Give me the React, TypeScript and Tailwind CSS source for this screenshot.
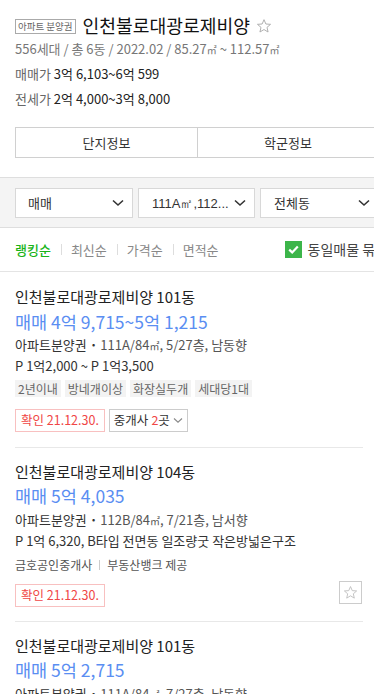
import React from "react";

const F = { fontFamily: '"Noto Sans CJK KR", "Noto Sans", sans-serif' };

function Chevron() {
  return (
    <svg width="12" height="8" viewBox="0 0 12 8" fill="none">
      <path d="M1 1.5 L6 6 L11 1.5" stroke="#333" strokeWidth="1.6" />
    </svg>
  );
}

function StarOutline({ size = 16, color = "#aaa" }: { size?: number; color?: string }) {
  return (
    <svg width={size} height={size} viewBox="0 0 24 24" fill="none">
      <path
        d="M12 2.5 L14.8 9 L21.8 9.5 L16.5 14.1 L18.1 21 L12 17.3 L5.9 21 L7.5 14.1 L2.2 9.5 L9.2 9 Z"
        stroke={color}
        strokeWidth="1.4"
        strokeLinejoin="round"
      />
    </svg>
  );
}

function Select({ label, w, pl, pr }: { label: React.ReactNode; w: string; pl: string; pr: string }) {
  return (
    <div className={`${w} shrink-0 h-[30px] bg-white border border-[#d8d8d8] flex items-center justify-between ${pl} ${pr} text-[13px] text-[#333]`}>
      <span className="leading-[28px] whitespace-nowrap">{label}</span>
      <Chevron />
    </div>
  );
}

function Sep() {
  return <span className="shrink-0 w-[1px] h-[11px] bg-[#dddddd] ml-[10px] mr-[9px]" />;
}

function Confirm() {
  return (
    <div className="h-[23px] px-[5px] border border-[#f8c0c0] text-[#f04646] text-[12.5px] flex items-center leading-none whitespace-nowrap">
      확인 21.12.30.
    </div>
  );
}

export default function App() {
  return (
    <div className="w-[374px] h-[694px] overflow-hidden bg-white" style={F}>
      <div className="w-[394px]">
        {/* Header */}
        <div className="px-[15px] pt-[12px]">
          <div className="h-[26px] flex items-center">
            <span className="h-[15px] border border-[#aaa] text-[9.5px] text-[#666] px-[2px] leading-[13px] flex items-center mt-[2px] whitespace-nowrap">
              아파트 분양권
            </span>
            <span className="ml-[7px] text-[18.2px] text-[#111] leading-[26px] whitespace-nowrap">인천불로대광로제비양</span>
            <span className="ml-[6px] mt-[2px]">
              <StarOutline size={16} color="#aaa" />
            </span>
          </div>
          <div className="leading-[22px] text-[13px] text-[#777]">
            556세대 / 총 6동 / 2022.02 / 85.27<span className="text-[10px]">㎡</span> ~ 112.57<span className="text-[10px]">㎡</span>
          </div>
          <div className="mt-[1px] leading-[24px] text-[13px]">
            <span className="text-[#666]">매매가</span> <span className="text-[#222]">3억 6,103~6억 599</span>
          </div>
          <div className="mt-[1px] leading-[24px] text-[13px]">
            <span className="text-[#666]">전세가</span> <span className="text-[#222]">2억 4,000~3억 8,000</span>
          </div>
          <div className="mt-[16px] h-[31px] flex border border-[#d0d0d0] text-[13px] text-[#333]">
            <div className="w-[182px] flex items-center justify-center border-r border-[#d0d0d0]">단지정보</div>
            <div className="flex-1 flex items-center justify-center">학군정보</div>
          </div>
        </div>

        {/* Filter band */}
        <div className="mt-[19px] bg-[#f4f4f4] border-y border-[#dedede] px-[15px] pt-[10px] pb-[9px] flex gap-[5px]">
          <Select label="매매" w="w-[118px]" pl="pl-[12px]" pr="pr-[8px]" />
          <Select
            label={<span style={{ fontFamily: '"Liberation Sans", Arial, sans-serif' }}>111A㎡,112...</span>}
            w="w-[117px]"
            pl="pl-[13px]"
            pr="pr-[8px]"
          />
          <Select label="전체동" w="w-[119px]" pl="pl-[13px]" pr="pr-[8px]" />
        </div>

        {/* Sort row */}
        <div className="h-[44px] border-b border-[#e4e4e4] px-[15px] flex items-center text-[13px] whitespace-nowrap">
          <span className="shrink-0 text-[#19b419] font-medium">랭킹순</span>
          <Sep />
          <span className="shrink-0 text-[#888]">최신순</span>
          <Sep />
          <span className="shrink-0 text-[#888]">가격순</span>
          <Sep />
          <span className="shrink-0 text-[#888]">면적순</span>
          <div className="shrink-0 ml-[66px] flex items-center">
            <span className="w-[17px] h-[17px] bg-[#3cb54a] flex items-center justify-center">
              <svg width="11" height="9" viewBox="0 0 11 9" fill="none">
                <path d="M1.2 4.6 L4.2 7.4 L9.8 1.4" stroke="#fff" strokeWidth="2.2" />
              </svg>
            </span>
            <span className="ml-[6px] text-[14px] text-[#444] whitespace-nowrap">동일매물 묶기</span>
          </div>
        </div>

        {/* Item 1 */}
        <div className="px-[15px]">
          <div className="w-[348px] border-b border-[#e8e8e8] pt-[15px] pb-[15px]">
            <div className="leading-[20px] text-[15px] text-[#222]">인천불로대광로제비양 101동</div>
            <div className="mt-[3px] leading-[24px] text-[17.5px] text-[#5a8ef2]">매매 4억 9,715~5억 1,215</div>
            <div className="mt-[1px] leading-[20px] text-[13px] text-[#555]">
              <span className="text-[#333]">아파트분양권</span> <b className="text-[#333]">·</b> 111A/84<span className="text-[10px]">㎡</span>, 5/27층, 남동향
            </div>
            <div className="leading-[20px] text-[13px] text-[#333]">P 1억2,000 ~ P 1억3,500</div>
            <div className="mt-[4px] flex gap-[4px] text-[12px] text-[#666]">
              {["2년이내", "방네개이상", "화장실두개", "세대당1대"].map((t) => (
                <span key={t} className="h-[17px] px-[3px] bg-[#f3f3f3] flex items-center leading-none">
                  {t}
                </span>
              ))}
            </div>
            <div className="mt-[12px] flex gap-[4px]">
              <Confirm />
              <div className="h-[23px] px-[4px] border border-[#ccc] text-[12.5px] text-[#333] flex items-center leading-none whitespace-nowrap">
                중개사 <span className="text-[#f04646] ml-[3px]">2</span>곳
                <svg className="ml-[3px]" width="10" height="7" viewBox="0 0 10 7" fill="none">
                  <path d="M1 1.5 L5 5.2 L9 1.5" stroke="#888" strokeWidth="1.1" />
                </svg>
              </div>
            </div>
          </div>

          {/* Item 2 */}
          <div className="w-[348px] border-b border-[#e8e8e8] pt-[14px] pb-[14px]">
            <div className="leading-[20px] text-[15px] text-[#222]">인천불로대광로제비양 104동</div>
            <div className="mt-[2px] leading-[24px] text-[17.5px] text-[#5a8ef2]">매매 5억 4,035</div>
            <div className="mt-[2px] leading-[20px] text-[13px] text-[#555]">
              <span className="text-[#333]">아파트분양권</span> <b className="text-[#333]">·</b> 112B/84<span className="text-[10px]">㎡</span>, 7/21층, 남서향
            </div>
            <div className="leading-[20px] text-[13px] text-[#333]">P 1억 6,320, B타입 전면동 일조량굿 작은방넓은구조</div>
            <div className="mt-[4px] leading-[20px] text-[12px] text-[#555] flex items-center">
              금호공인중개사<span className="shrink-0 w-[1px] h-[10px] bg-[#cccccc] mx-[7px]" />부동산뱅크 제공
            </div>
            <div className="mt-[6px] flex items-start justify-between">
              <div className="mt-[3px]">
                <Confirm />
              </div>
              <div className="w-[23px] h-[23px] border border-[#ccc] flex items-center justify-center mr-[1px]">
                <StarOutline size={15} color="#bbb" />
              </div>
            </div>
          </div>

          {/* Item 3 */}
          <div className="w-[348px] pt-[14px] pb-[14px]">
            <div className="leading-[20px] text-[15px] text-[#222]">인천불로대광로제비양 101동</div>
            <div className="mt-[2px] leading-[24px] text-[17.5px] text-[#5a8ef2]">매매 5억 2,715</div>
            <div className="mt-[2px] leading-[20px] text-[13px] text-[#555]">
              <span className="text-[#333]">아파트분양권</span> <b className="text-[#333]">·</b> 111A/84<span className="text-[10px]">㎡</span>, 7/27층, 남동향
            </div>
          </div>
        </div>
      </div>
    </div>
  );
}
